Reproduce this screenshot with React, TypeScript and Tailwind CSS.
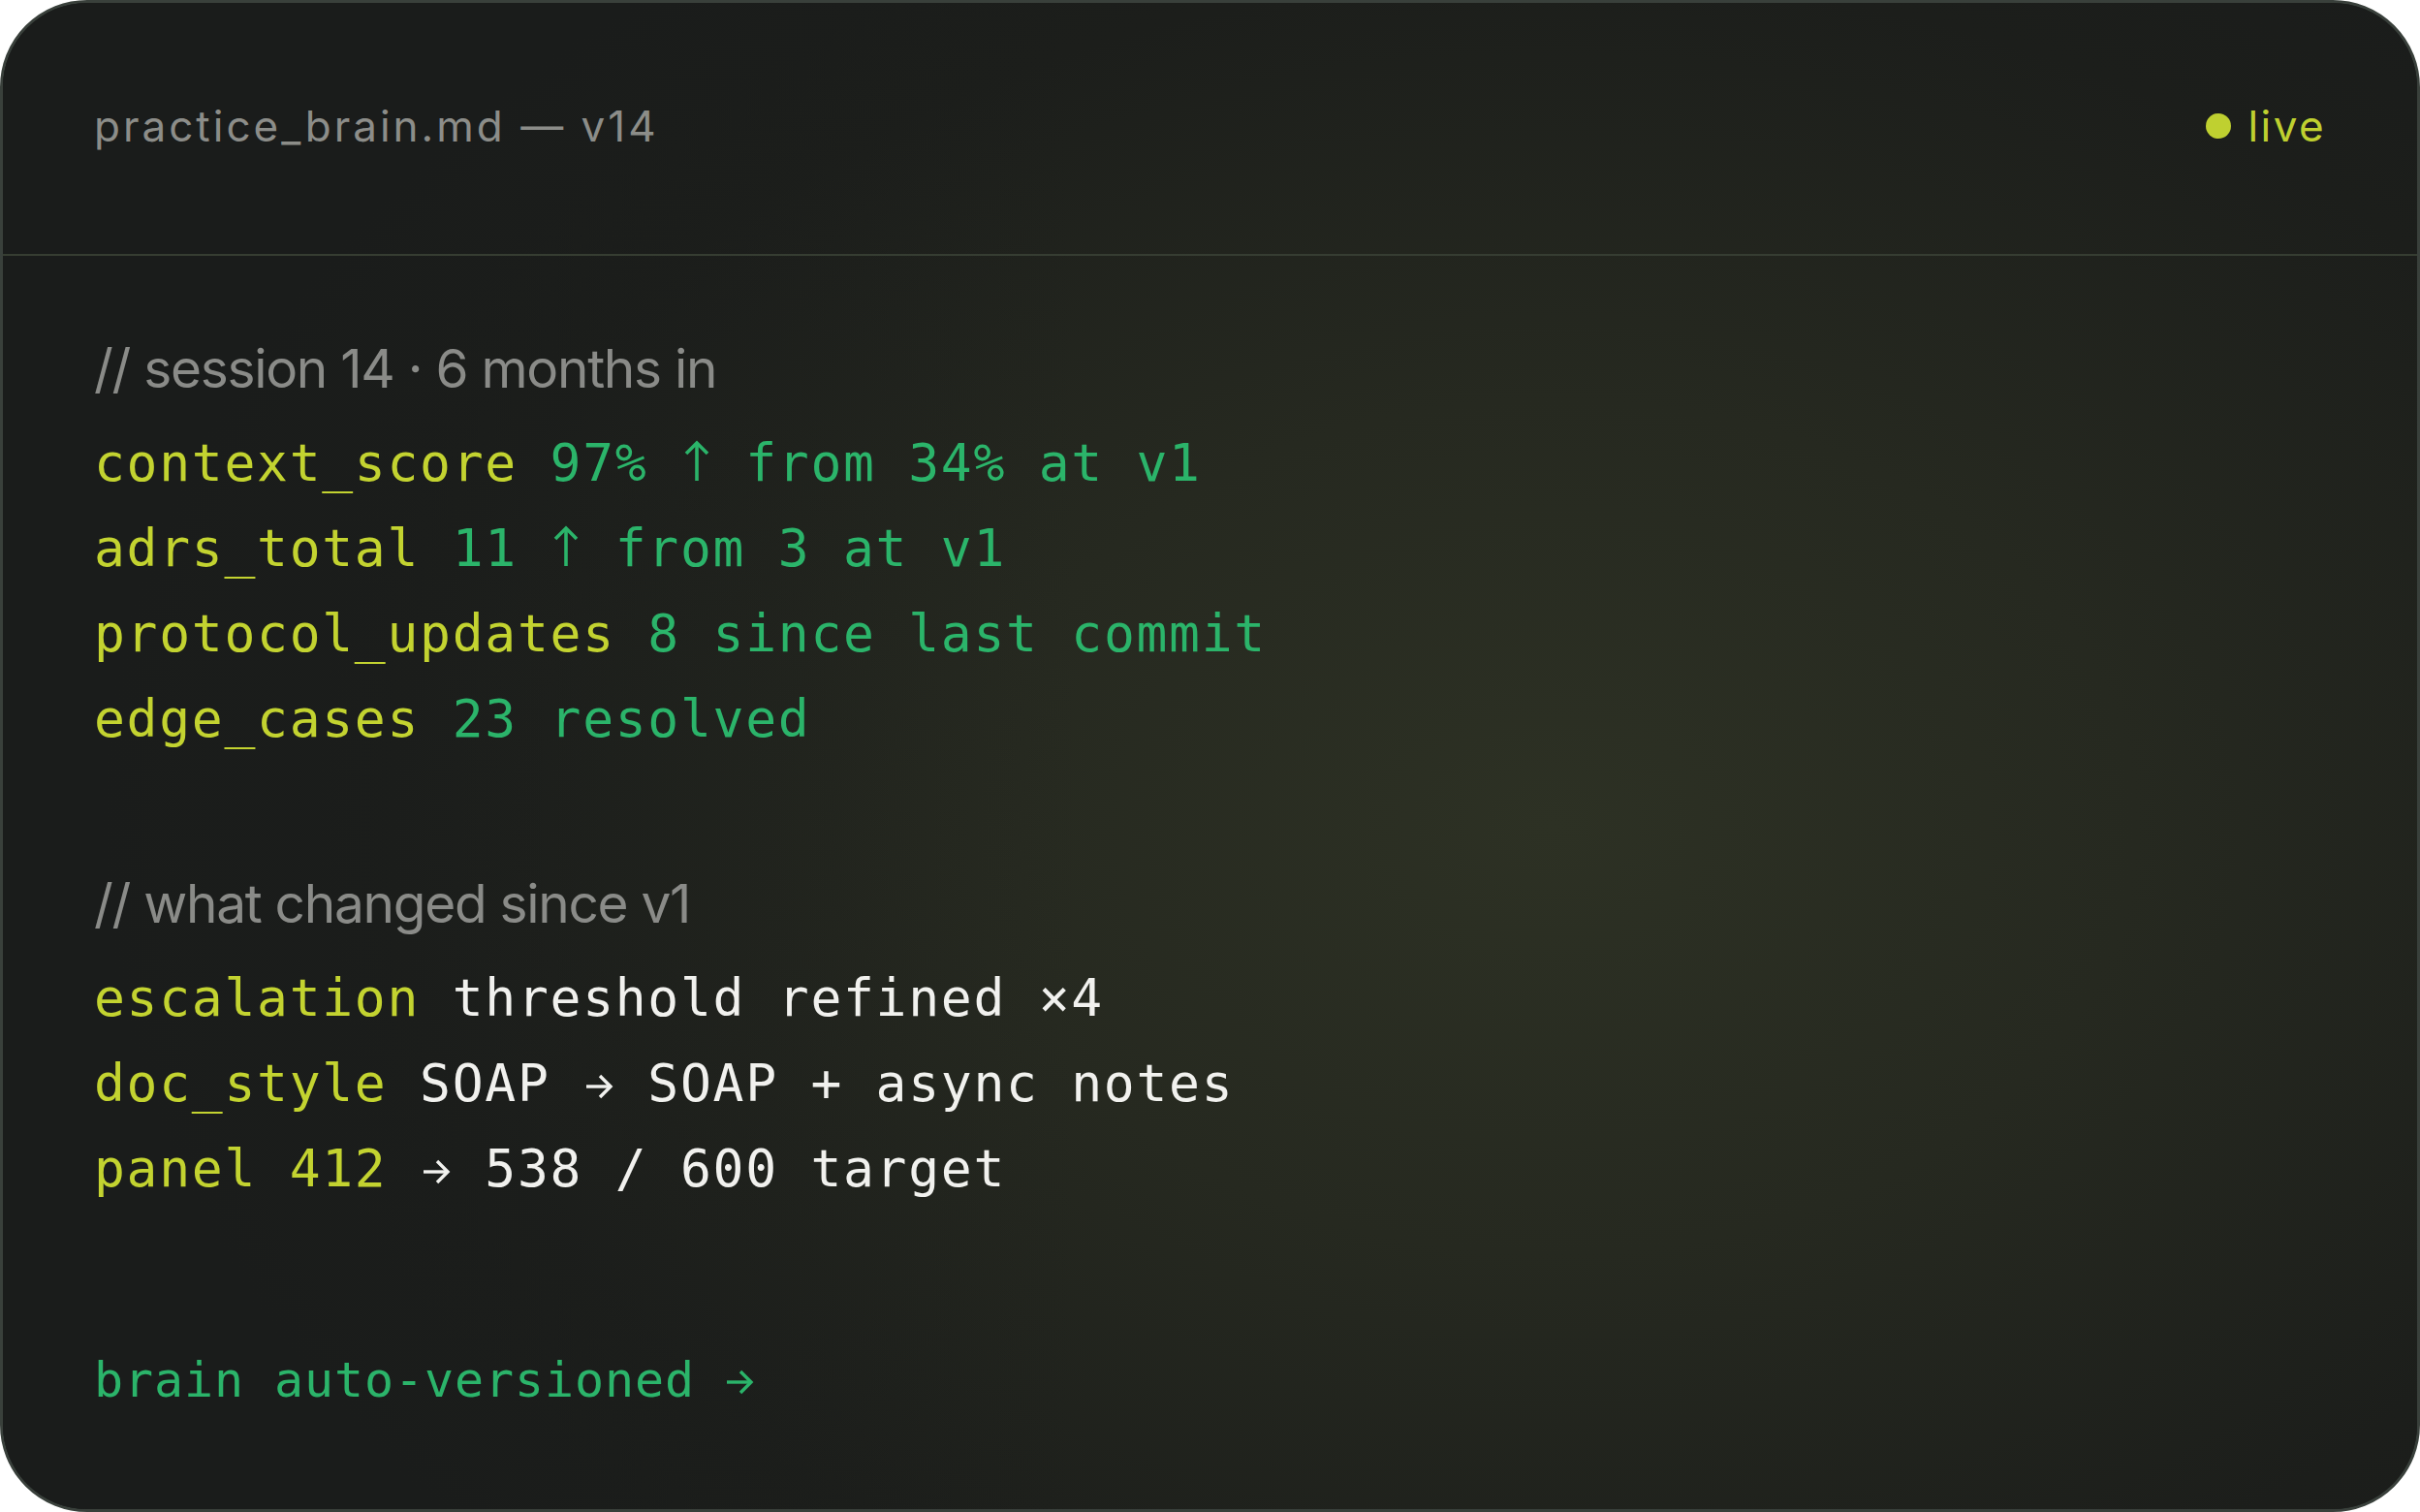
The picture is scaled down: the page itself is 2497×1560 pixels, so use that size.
import React from "react";

const mono = "font-['DejaVu_Sans_Mono','Liberation_Mono',monospace] text-[53px] tracking-[1.7px] leading-[88px] h-[88px] whitespace-pre";
const K = "text-[#c3d330]";
const G = "text-[#2bb46a]";
const W = "text-[#f1f1ee]";

function Up() {
  return (
    <span className="inline-block w-[33.6px] text-center">
      <svg width="30" height="42" viewBox="0 0 30 42" className="inline-block align-baseline" fill="none" stroke="currentColor" strokeWidth="3.6" strokeLinecap="butt" strokeLinejoin="miter">
        <path d="M15 42V3" />
        <path d="M4 14L15 3L26 14" />
      </svg>
    </span>
  );
}

function Right({ w = 33.6 }: { w?: number }) {
  return (
    <span className="inline-block text-center" style={{ width: w }}>
      <svg width="30" height="30" viewBox="0 0 30 30" className="inline-block align-baseline" fill="none" stroke="currentColor" strokeWidth="3.4" strokeLinecap="butt" strokeLinejoin="miter">
        <path d="M2 15H27" />
        <path d="M16 4L27 15L16 26" />
      </svg>
    </span>
  );
}

function Comment({ children, className = "" }: { children: React.ReactNode; className?: string }) {
  return (
    <div className={`font-['Inter','Noto_Sans',sans-serif] text-[55px] tracking-[-1.3px] leading-[88px] h-[88px] text-[#8a8b88] whitespace-pre ${className}`}>
      {children}
    </div>
  );
}

export default function App() {
  return (
    <div className="w-[2497px] h-[1560px] bg-white">
      <div className="relative w-full h-full rounded-[90px] border-[3px] border-[#39403b] overflow-hidden bg-[#1a1c1b] flex flex-col">
        <div className="pointer-events-none absolute inset-0 bg-[radial-gradient(ellipse_1500px_1100px_at_1600px_850px,#2d3124_0%,#262920_40%,#1c1e1b_80%,#1a1c1b_100%)]" />
        <div className="pointer-events-none absolute inset-0 bg-[linear-gradient(90deg,rgba(26,28,27,0.7)_0%,rgba(26,28,27,0)_45%)]" />
        <div className="relative flex flex-col h-full">
          <div className="h-[261px] flex items-center justify-between px-[94px] pb-[6px] border-b-2 border-[#363d32] shrink-0">
            <div className="font-['Inter','Noto_Sans',sans-serif] text-[44px] tracking-[3px] text-[#8c8d89]">
              practice_brain.md — v14
            </div>
            <div className="flex items-center gap-[18px] font-['Inter','Noto_Sans',sans-serif] text-[44px] tracking-[2.4px] text-[#bfd030]">
              <span className="w-[26px] h-[26px] rounded-full bg-[#bfd030]" />
              <span>live</span>
            </div>
          </div>
          <div className="flex flex-col px-[94px] pt-[72px]">
            <Comment>// session 14 · 6 months in</Comment>
            <div className="mt-[10px] flex flex-col">
              <div className={mono}><span className={K}>context_score</span> <span className={G}>97% <Up /> from 34% at v1</span></div>
              <div className={mono}><span className={K}>adrs_total</span> <span className={G}>11 <Up /> from 3 at v1</span></div>
              <div className={mono}><span className={K}>protocol_updates</span> <span className={G}>8 since last commit</span></div>
              <div className={mono}><span className={K}>edge_cases</span> <span className={G}>23 resolved</span></div>
            </div>
            <Comment className="mt-[102px]">// what changed since v1</Comment>
            <div className="mt-[10px] flex flex-col">
              <div className={mono}><span className={K}>escalation</span> <span className={W}>threshold refined ×4</span></div>
              <div className={mono}><span className={K}>doc_style</span> <span className={W}>SOAP <Right /> SOAP + async notes</span></div>
              <div className={mono}><span className={K}>panel 412</span> <span className={W}><Right /> 538 / 600 target</span></div>
            </div>
            <div className="mt-[130px] font-['DejaVu_Sans_Mono','Liberation_Mono',monospace] text-[50px] tracking-[0.9px] leading-[88px] h-[88px] whitespace-pre">
              <span className={G}>brain auto-versioned <Right w={28} /></span>
            </div>
          </div>
        </div>
      </div>
    </div>
  );
}
